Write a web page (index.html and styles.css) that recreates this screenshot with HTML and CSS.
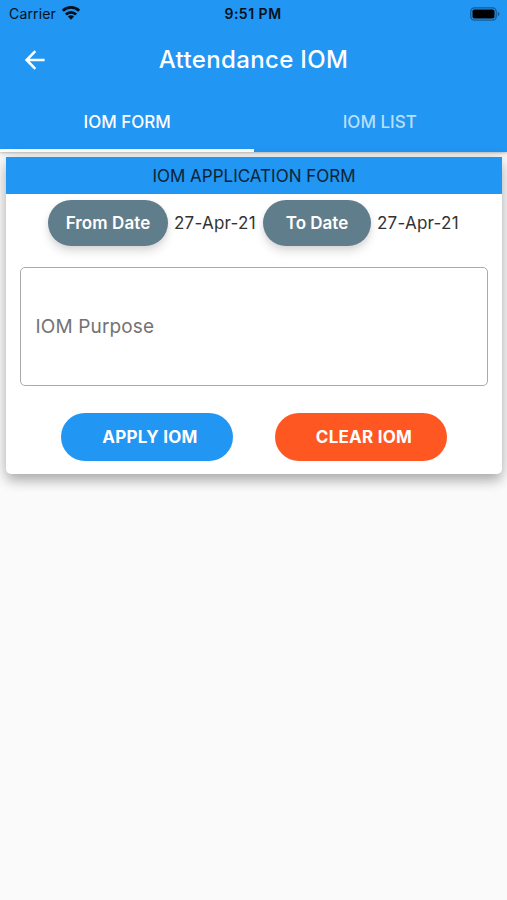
FILE: index.html
```html
<!DOCTYPE html>
<html lang="en">
<head>
<meta charset="utf-8">
<title>Attendance IOM</title>
<link rel="stylesheet" href="styles.css">
</head>
<body>
<header class="app-header">
  <div class="status-bar">
    <div class="carrier"><span>Carrier</span>
      <svg class="wifi" width="20" height="15" viewBox="0 0 20 15"><g fill="none" stroke="#03101c" stroke-width="2.8"><path d="M1.8 5.7A12 12 0 0 1 18.2 5.7"/><path d="M4.9 9.4A7.2 7.2 0 0 1 15.1 9.4"/></g><path fill="#03101c" d="M6.9 11.5a4.4 4.4 0 0 1 6.2 0L10 14.7z"/></svg>
    </div>
    <span class="time">9:51 PM</span>
    <svg class="battery" width="31" height="14" viewBox="0 0 31 14"><rect x=".8" y=".8" width="25.4" height="12.4" rx="3.6" fill="none" stroke="#145c98" stroke-width="1.3"/><rect x="2.5" y="2.4" width="22" height="9.2" rx="1.8" fill="#000"/><path d="M27.7 4.8c2.4.8 2.4 3.6 0 4.4z" fill="#145c98"/></svg>
  </div>
  <div class="toolbar">
    <svg class="back" width="20" height="20" viewBox="0 0 20 20" fill="none" stroke="#fff" stroke-width="2.5"><path d="M19.6 10H2M10.3 1.2L1.6 10l8.7 8.8"/></svg>
    <h1>Attendance IOM</h1>
  </div>
  <nav class="tabs">
    <div class="tab active"><span>IOM FORM</span></div>
    <div class="tab"><span>IOM LIST</span></div>
  </nav>
</header>
<main class="card">
  <h2><span>IOM APPLICATION FORM</span></h2>
  <div class="dates">
    <button class="pill from">From Date</button><span class="date">27-Apr-21</span>
    <button class="pill to">To Date</button><span class="date">27-Apr-21</span>
  </div>
  <div class="purpose"><span>IOM Purpose</span></div>
  <div class="actions">
    <button class="apply"><span>APPLY IOM</span></button>
    <button class="clear"><span>CLEAR IOM</span></button>
  </div>
</main>
</body>
</html>
```
FILE: styles.css
```css
* { box-sizing: border-box; }
body { margin: 0; min-height: 900px; background: #fafafa; font-family: Inter, "Liberation Sans", sans-serif; overflow: hidden; }
button { border: 0; padding: 0; font: inherit; color: #fff; white-space: nowrap; }
h1, h2 { margin: 0; font-weight: 400; }
.app-header { height: 152px; background: #2196f3; box-shadow: 0 1px 2px rgba(0,0,0,.2), 0 3px 6px rgba(0,0,0,.08); }
.status-bar { display: grid; grid-template-columns: 1fr auto 1fr; align-items: center; height: 27px; padding: 0 6px 0 9px; color: #03101c; }
.carrier { display: flex; align-items: center; gap: 5px; font-size: 14px; letter-spacing: .15px; }
.wifi { margin-top: -3px; }
.time { margin: 0 1px 0 -3px; font-size: 14px; font-weight: 600; letter-spacing: .5px; }
.battery { justify-self: end; }
.toolbar { display: grid; grid-template-columns: 60px 1fr 60px; align-items: center; height: 65px; }
.back { margin-left: 25px; }
h1 { color: #fff; font-size: 24px; font-weight: 500; text-align: center; letter-spacing: .35px; }
.tabs { display: grid; grid-template-columns: 1fr 1fr; height: 60px; }
.tab { display: flex; align-items: center; justify-content: center; border-bottom: 3px solid transparent; color: rgba(255,255,255,.7); font-size: 17px; font-weight: 500; padding: 2px 0 0 1px; }
.tab + .tab { padding: 2px 1px 0 0; }
.active { color: #fff; border-color: #fff; }
.card { position: relative; margin: 5px 5px 0 6px; height: 317px; background: #fff; border-radius: 0 0 5px 5px; box-shadow: 0 8px 12px -1px rgba(0,0,0,.2), 0 3px 16px rgba(0,0,0,.18); }
h2 { display: flex; align-items: center; justify-content: center; height: 37px; background: #2196f3; color: #0b2437; font-size: 17px; }
.dates { display: flex; align-items: center; margin: 6px 0 0 42px; height: 46px; }
.pill { height: 46px; border-radius: 23px; background: #607d8b; font-size: 17px; font-weight: 600; letter-spacing: .1px; box-shadow: 0 6px 10px rgba(0,0,0,.12), 0 2px 5px rgba(0,0,0,.06); }
.from { width: 120px; }
.to { width: 108px; letter-spacing: 0; }
.date { width: 95px; padding-left: 6px; font-size: 17px; letter-spacing: .25px; color: #333; white-space: nowrap; }
.purpose { display: flex; align-items: center; margin: 21px 14px 0 14px; height: 119px; padding-left: 14.5px; border: 1.5px solid #aaa; border-radius: 5px; color: #737373; font-size: 19px; letter-spacing: .15px; }
.actions { display: flex; gap: 42px; margin: 27px 0 0 55px; }
.actions button { width: 172px; height: 48px; border-radius: 24px; font-size: 17px; font-weight: 700; letter-spacing: .25px; padding-left: 6px; }
.apply { background: #2196f3; }
.clear { background: #ff5722; }
```
